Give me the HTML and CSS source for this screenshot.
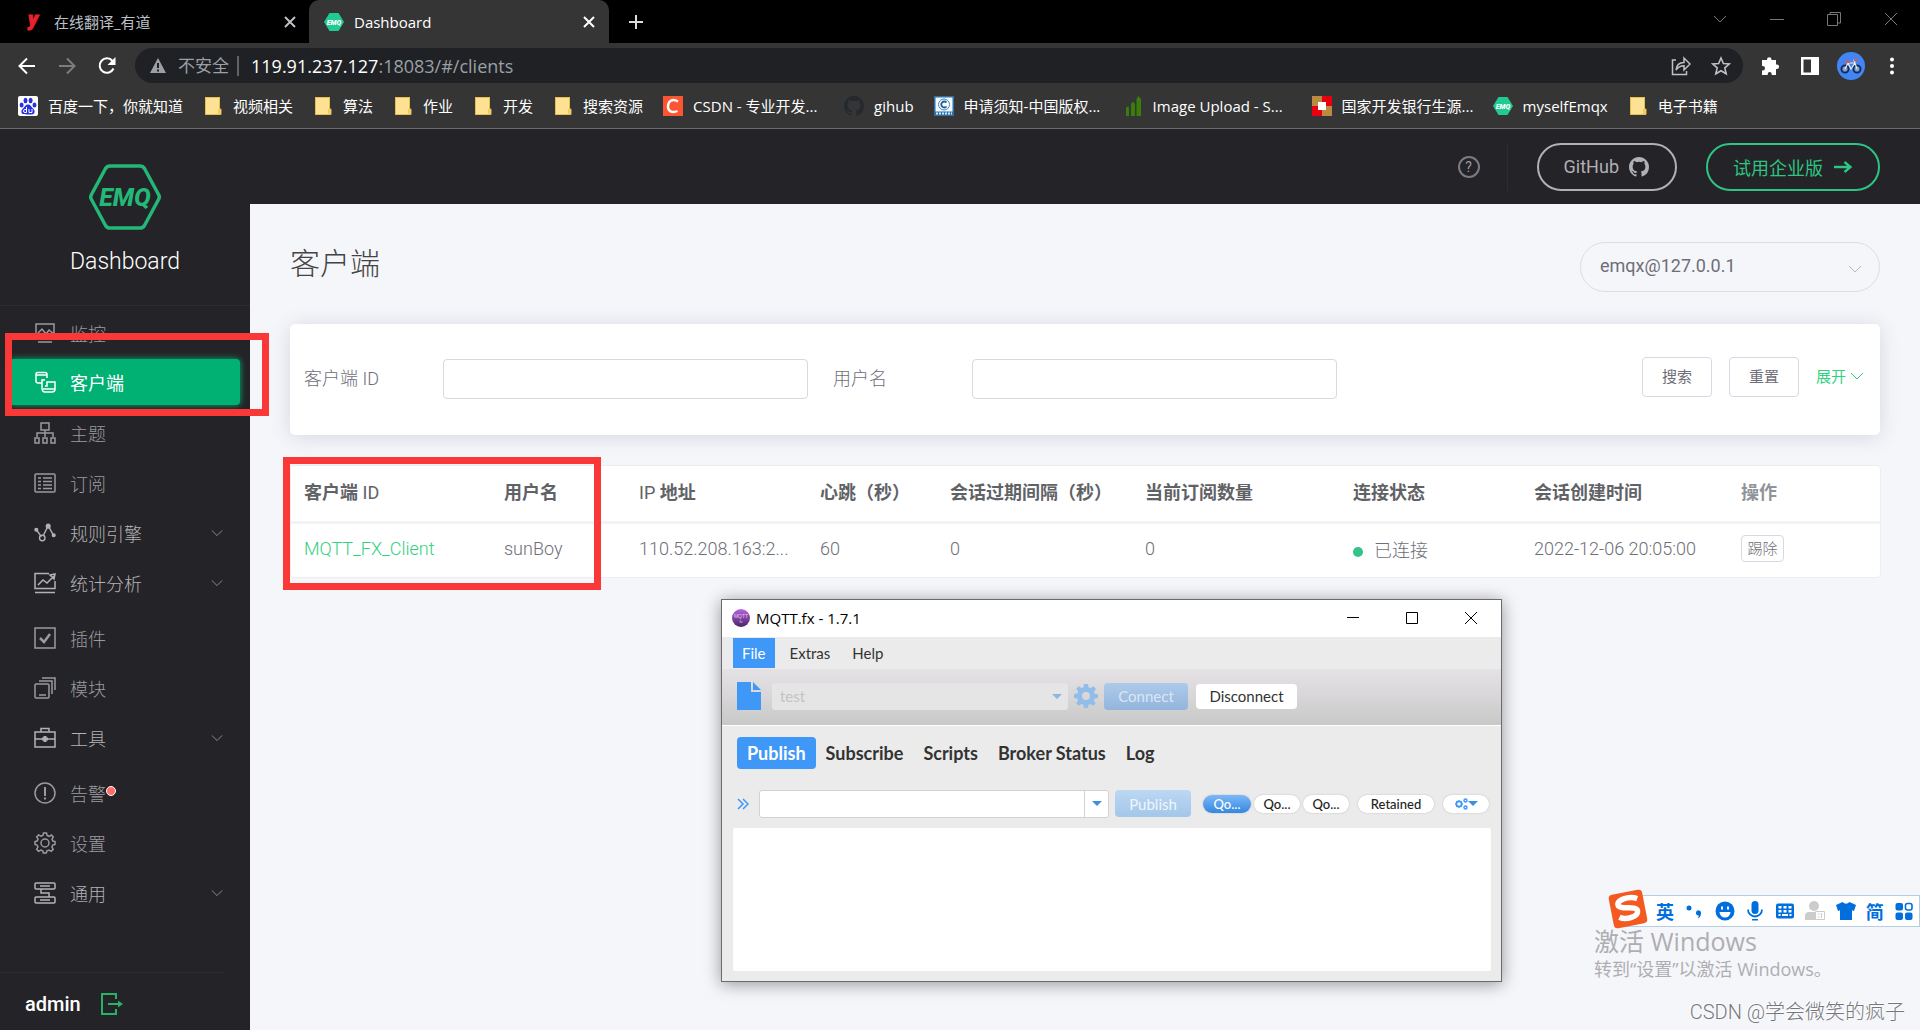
FILE: index.html
```html
<!DOCTYPE html>
<html lang="zh-CN">
<head>
<meta charset="utf-8">
<title>Dashboard</title>
<link rel="stylesheet" href="styles.css">
</head>
<body>
<svg class="sprite" aria-hidden="true">
  <symbol id="i-chevron" viewBox="0 0 14 14"><path d="M1 4l6 6 6-6" fill="none" stroke="currentColor"/></symbol>
  <symbol id="i-close" viewBox="0 0 14 14"><path d="M2 2l10 10M12 2L2 12" fill="none" stroke="currentColor" stroke-width="2"/></symbol>
  <symbol id="i-thin-close" viewBox="0 0 14 14"><path d="M1 1l12 12M13 1L1 13" fill="none" stroke="currentColor"/></symbol>
  <symbol id="i-folder" viewBox="0 0 20 20"><path d="M3 1h14v12.500h1v5H2V1z" fill="#fde293"/><path d="M2.500 1.500h14v11.500h1.500v5.500H2.500z" fill="none" stroke="#e6bf4f"/><path d="M15 13h2.500v5H15z" fill="#f3cc5e"/></symbol>
  <symbol id="i-emq" viewBox="0 0 20 20"><path d="M5.500 1h9L20 10l-5.500 9h-9L0 10z" fill="#1fcb91"/><text x="10" y="12.500" text-anchor="middle" font-family="Roboto, sans-serif" font-size="7" font-weight="900" font-style="italic" fill="#fff">EMQ</text></symbol>
  <symbol id="i-github" viewBox="0 0 16 16"><path fill="currentColor" d="M8 0C3.580 0 0 3.580 0 8c0 3.540 2.290 6.530 5.470 7.590.4.070.55-.17.55-.38 0-.19-.01-.82-.01-1.490-2.010.37-2.530-.49-2.690-.94-.09-.23-.48-.94-.82-1.130-.28-.15-.68-.52-.01-.53.63-.01 1.080.58 1.230.82.72 1.210 1.870.87 2.330.66.07-.52.28-.87.51-1.070-1.780-.2-3.640-.89-3.640-3.950 0-.87.31-1.590.82-2.150-.08-.2-.36-1.020.08-2.120 0 0 .67-.21 2.200.82a7.600 7.600 0 014 0c1.530-1.040 2.200-.82 2.200-.82.44 1.100.16 1.920.08 2.120.51.56.82 1.270.82 2.150 0 3.070-1.870 3.750-3.650 3.950.29.25.54.73.54 1.480 0 1.070-.01 1.930-.01 2.200 0 .21.15.46.55.38A8.010 8.010 0 0016 8c0-4.420-3.580-8-8-8z"/></symbol>
  <symbol id="i-gear" viewBox="0 0 24 24"><path fill="currentColor" fill-rule="evenodd" d="M10 0h4l.6 3.300 2 .9L19.400 2.300l2.500 2.700-1.900 2.700.8 2 3.200.5v3.800l-3.300.6-.8 2 1.900 2.700-2.600 2.500-2.700-1.900-2 .8L14 24h-4l-.6-3.300-2-.8-2.700 1.900-2.600-2.600L4 16.500l-.8-2L0 14v-4l3.300-.6.8-2L2.200 4.800l2.600-2.600 2.700 1.900 2-.8zM12 8a4 4 0 100 8 4 4 0 000-8z"/></symbol>
</svg>

<div class="browser">
  <div class="tabstrip">
    <div class="tab">
      <svg class="fav" viewBox="0 0 20 20"><text x="4" y="14" font-family="Roboto, sans-serif" font-size="20" font-weight="900" font-style="italic" fill="#e8222d" stroke="#e8222d">y</text></svg>
      <span class="tab-title">在线翻译_有道</span>
      <button class="tab-close" aria-label="关闭"><svg width="14" height="14"><use href="#i-close"/></svg></button>
    </div>
    <div class="tab tab-active">
      <svg class="fav"><use href="#i-emq"/></svg>
      <span class="tab-title">Dashboard</span>
      <button class="tab-close" aria-label="关闭"><svg width="14" height="14"><use href="#i-close"/></svg></button>
    </div>
    <button class="new-tab" aria-label="新标签页"><svg width="16" height="16" viewBox="0 0 16 16"><path d="M8 1v14M1 8h14" stroke="currentColor" stroke-width="2"/></svg></button>
    <div class="win-ctl">
      <button aria-label="搜索标签页"><svg width="14" height="14"><use href="#i-chevron"/></svg></button>
      <button aria-label="最小化"><svg width="14" height="14" viewBox="0 0 14 14"><path d="M0 7.500h14" stroke="currentColor"/></svg></button>
      <button aria-label="还原"><svg width="14" height="14" viewBox="0 0 14 14"><path d="M.5 2.500h10v11H.5zM3 2V.5h10.500V11H11" fill="none" stroke="currentColor"/></svg></button>
      <button aria-label="关闭窗口"><svg width="14" height="14"><use href="#i-thin-close"/></svg></button>
    </div>
  </div>

  <div class="toolbar">
    <button class="nav-btn" aria-label="后退"><svg width="20" height="20" viewBox="0 0 20 20"><path d="M18 10H3M10 2.500L2.500 10l7.500 7.500" fill="none" stroke="currentColor" stroke-width="2"/></svg></button>
    <button class="nav-btn nav-off" aria-label="前进"><svg width="20" height="20" viewBox="0 0 20 20"><path d="M2 10h15M10 2.500l7.500 7.500-7.500 7.500" fill="none" stroke="currentColor" stroke-width="2"/></svg></button>
    <button class="nav-btn" aria-label="刷新"><svg width="20" height="20" viewBox="0 0 20 20"><path d="M16.500 12.500A7.200 7.200 0 1115.500 5" fill="none" stroke="currentColor" stroke-width="2"/><path d="M18.500 1v8h-8z" fill="currentColor"/></svg></button>
    <div class="omnibox">
      <svg width="16" height="15" viewBox="0 0 16 15"><path d="M8 0l8 15H0z" fill="#9aa0a6"/><path d="M8 5v5M8 11.500v2" stroke="#202124" stroke-width="2"/></svg>
      <span class="insecure">不安全</span>
      <span class="url"><b>119.91.237.127</b>:18083/#/clients</span>
      <svg class="share" width="20" height="20" viewBox="0 0 20 20"><path d="M5 4H1.500v14.500h14V15M5 14c.5-5 3-7.500 8-7.500V2l6 6-6 6V9.800C9.500 9.800 7 11 5 14z" fill="none" stroke="currentColor" stroke-width="1.500"/></svg>
      <svg width="20" height="20" viewBox="0 0 20 20"><path d="M10 2l2.400 5.500 5.900.5-4.500 3.900 1.400 5.900L10 14.700l-5.200 3.100 1.400-5.900L1.700 8l5.900-.5z" fill="none" stroke="currentColor" stroke-width="1.600"/></svg>
    </div>
    <div class="tool-icons">
      <svg width="20" height="20" viewBox="0 0 20 20"><path d="M7 3.500a2.200 2.200 0 014.500 0V4H16v4.500h.8a2.300 2.300 0 010 4.600H16V19h-4.300v-1a2 2 0 00-4 0v1H2v-4.500h.8a2.200 2.200 0 000-4.400H2V4h5z" fill="#fff"/></svg>
      <svg width="20" height="20" viewBox="0 0 20 20"><path d="M1 1h18v18H1zM3.500 3.500v13H11v-13z" fill="#fff" fill-rule="evenodd"/></svg>
      <svg width="28" height="28" viewBox="0 0 28 28"><circle cx="14" cy="14" r="14" fill="#4285f4"/><g fill="none" stroke="#1b2a4a" stroke-width="1.800"><circle cx="8" cy="17" r="3.600"/><circle cx="20" cy="17" r="3.600"/></g><circle cx="8" cy="17" r="2.200" fill="#8aa4c8"/><circle cx="20" cy="17" r="2.200" fill="#8aa4c8"/><path d="M8 17l3-6h7l2 6M11 11l3 6 4-6-1-3h3" fill="none" stroke="#e8eaed" stroke-width="1.200"/><path d="M8 10h5M17 8h4" stroke="#e8543f" stroke-width="1.800"/></svg>
      <svg width="20" height="20" viewBox="0 0 20 20"><g fill="#fff"><circle cx="10" cy="3.500" r="2"/><circle cx="10" cy="10" r="2"/><circle cx="10" cy="16.500" r="2"/></g></svg>
    </div>
  </div>

  <nav class="bookmarks">
    <a href="#"><svg viewBox="0 0 20 20"><rect width="20" height="20" rx="2" fill="#fff"/><g fill="#2932e1"><ellipse cx="3.600" cy="9" rx="2" ry="2.600"/><ellipse cx="7.500" cy="4.500" rx="2" ry="2.700"/><ellipse cx="12.600" cy="4.500" rx="2" ry="2.700"/><ellipse cx="16.500" cy="9" rx="2" ry="2.600"/><path d="M10 8.500c2.500 0 3 2 4.500 3.500s2.500 2.500 2 4.500-2.500 2.300-6.500 2-6 .2-6.500-2 .5-3 2-4.500S7.500 8.500 10 8.500z"/></g><path d="M8.500 11v5.500h-1.500a1.500 1.500 0 010-3h1.500M11 13v3.500h3V13" fill="none" stroke="#fff"/></svg>百度一下，你就知道</a>
    <a href="#"><svg><use href="#i-folder"/></svg>视频相关</a>
    <a href="#"><svg><use href="#i-folder"/></svg>算法</a>
    <a href="#"><svg><use href="#i-folder"/></svg>作业</a>
    <a href="#"><svg><use href="#i-folder"/></svg>开发</a>
    <a href="#"><svg><use href="#i-folder"/></svg>搜索资源</a>
    <a href="#" class="bm-mid"><svg viewBox="0 0 20 20"><rect width="20" height="20" fill="#fc5531"/><path d="M15 5.500C9 2 5 5.500 5 10.500c0 5.500 5 6.500 9.500 4.500" fill="none" stroke="#fff" stroke-width="2.400"/></svg>CSDN - 专业开发...</a>
    <a href="#" class="bm-dark"><svg><use href="#i-github"/></svg><span>gihub</span></a>
    <a href="#" class="bm-long"><svg viewBox="0 0 20 20"><rect width="20" height="20" fill="#2f6fa8"/><rect x="1.500" y="1.500" width="17" height="14" fill="#f4f8fb"/><circle cx="10" cy="8.500" r="5.500" fill="none" stroke="#4b86b8"/><path d="M12.500 6.500a3 3 0 100 4" fill="none" stroke="#205e9b" stroke-width="1.800"/><path d="M2 17.500h16" stroke="#dce9f4" stroke-width="2" stroke-dasharray="2 1"/></svg>申请须知-中国版权...</a>
    <a href="#" class="bm-long"><svg viewBox="0 0 20 20"><g fill="#3a7d0b"><path d="M3 12l2-2 1 2v8H3zM8 8l2-2.500L12 8v12H8zM13.500 3l2-3L18 3v17h-4.500z"/></g></svg>Image Upload - S...</a>
    <a href="#" class="bm-mid"><svg viewBox="0 0 20 20"><path d="M0 0h10v10H0zM10 10h10v10H10z" fill="#bd8a42"/><path d="M10 0h10v10H10zM0 10h10v10H0z" fill="#e60012"/><rect x="6" y="6" width="8" height="8" fill="#fff"/></svg>国家开发银行生源...</a>
    <a href="#"><svg><use href="#i-emq"/></svg>myselfEmqx</a>
    <a href="#"><svg><use href="#i-folder"/></svg>电子书籍</a>
  </nav>
</div>

<div class="app">
  <aside class="sidebar">
    <div class="brand">
      <svg width="72" height="66" viewBox="0 0 72 66"><path d="M21 2h30q3 0 4.500 2.500l14 26q1.500 2.500 0 5l-14 26Q54 64 51 64H21q-3 0-4.500-2.500l-14-26q-1.500-2.500 0-5l14-26Q18 2 21 2z" fill="none" stroke="#23b877" stroke-width="3.500"/><text x="36" y="42" text-anchor="middle" font-family="Roboto, sans-serif" font-size="25" font-weight="800" font-style="italic" fill="#23b877">EMQ</text></svg>
      <span>Dashboard</span>
    </div>
    <nav class="menu">
      <div class="menu-group">
        <a href="#"><svg viewBox="0 0 22 22"><path d="M2 2h18v14H2zM4 20h14M4 11l4-4 4 5 3-4 5 4"/></svg>监控</a>
        <a href="#" class="active"><svg viewBox="0 0 22 22"><path d="M8 12H4q-2 0-2-2V3q0-1.500 1.500-1.500H11q2 0 2 2V7M2 4h11M11 9h-3v8q0 4 3 4h7q3 0 3-3v-7h-8v4h-2M9 18h12"/></svg>客户端</a>
        <a href="#"><svg viewBox="0 0 22 22"><path d="M7 1h8v7H7zM11 8v7M3 15v-4h16v4M1 16h4v5H1zM9 16h4v5H9zM17 16h4v5h-4z"/></svg>主题</a>
        <a href="#"><svg viewBox="0 0 22 22"><rect x="1" y="2" width="20" height="18" rx="1"/><path d="M4 6h3M9 6h9M4 9.500h3M9 9.500h9M4 13h3M9 13h9M4 16.500h3M9 16.500h9"/></svg>订阅</a>
        <a href="#" class="sub"><svg viewBox="0 0 24 22"><path d="M3 8l5 7M10 14l5-10M16 4l5 9"/><circle cx="2.500" cy="7.500" r="1.500" fill="currentColor"/><circle cx="9" cy="16.500" r="3"/><circle cx="15.500" cy="3.500" r="2" fill="currentColor"/><circle cx="21.500" cy="13.500" r="1.500" fill="currentColor"/></svg>规则引擎<svg class="caret"><use href="#i-chevron"/></svg></a>
        <a href="#" class="sub"><svg viewBox="0 0 22 22"><path d="M15 1.500H1v15h20V9M1 20.500h20M4 13l5-5 4 3 7-7M16 3l5-1-1 5z"/></svg>统计分析<svg class="caret"><use href="#i-chevron"/></svg></a>
      </div>
      <div class="menu-group">
        <a href="#"><svg viewBox="0 0 22 22"><path d="M1 1h20v20H1z"/><path d="M6 11l4 4 6-8" stroke-width="2.500"/></svg>插件</a>
        <a href="#"><svg viewBox="0 0 22 22"><rect x="1" y="7" width="14" height="14" rx="1"/><path d="M5 4h13v13M8 1h13v12M5 18h7"/></svg>模块</a>
        <a href="#" class="sub"><svg viewBox="0 0 22 22"><path d="M1 5h20v15H1zM7 5V1.500h8V5M1 12h7M14 12h7"/><path d="M8 12h6M11 9v6" stroke-width="3"/></svg>工具<svg class="caret"><use href="#i-chevron"/></svg></a>
      </div>
      <div class="menu-group">
        <a href="#"><svg viewBox="0 0 22 22"><circle cx="11" cy="11" r="10"/><path d="M11 5v9M11 15.500v2" stroke-width="2"/></svg>告警<i class="dot"></i></a>
        <a href="#"><svg viewBox="0 0 22 22"><circle cx="11" cy="11" r="4"/><path d="M9.500 1h3l.6 2.500 2 .8L17.500 3l1.800 2-1.300 2.200.8 1.800 2.200.6v2.800l-2.300.7-.8 2 1.300 2.200-2 2-2.200-1.300-2 .8-.7 2.200h-3L8.800 18.800l-2-.8-2.200 1.300-2-2L3.900 15l-.8-2L1 12.400V9.600L3.200 9 4 7 2.700 4.900l2-2L6.900 4.200l2-.8z"/></svg>设置</a>
        <a href="#" class="sub"><svg viewBox="0 0 22 22"><rect x="1" y="1" width="20" height="6" rx="1"/><rect x="1" y="15" width="20" height="6" rx="1"/><path d="M6 4h10M6 18h10M7 7v4h8v4"/></svg>通用<svg class="caret"><use href="#i-chevron"/></svg></a>
      </div>
    </nav>
    <div class="user">
      <span>admin</span>
      <a href="#" aria-label="退出"><svg width="22" height="22" viewBox="0 0 22 22"><path d="M15 6V1H1v20h14v-5M7 11h12" fill="none" stroke="currentColor" stroke-width="2"/><path d="M17 7.500l5 3.500-5 3.500z" fill="currentColor"/></svg></a>
    </div>
  </aside>

  <div class="main">
    <header class="topbar">
      <a href="#" class="help" aria-label="帮助">?</a>
      <div class="top-links">
        <a href="#" class="pill">GitHub<svg width="20" height="20"><use href="#i-github"/></svg></a>
        <a href="#" class="pill pill-green">试用企业版<svg width="18" height="14" viewBox="0 0 18 14"><path d="M0 7h15M10.500 2l6 5-6 5" fill="none" stroke="currentColor" stroke-width="2.400"/></svg></a>
      </div>
    </header>
    <main class="content">
      <div class="page-head">
        <h1>客户端</h1>
        <div class="node">
          <select aria-label="节点"><option>emqx@127.0.0.1</option></select>
          <svg width="14" height="14"><use href="#i-chevron"/></svg>
        </div>
      </div>

      <form class="card">
        <div class="field"><label for="cid">客户端 ID</label><input id="cid" type="text"></div>
        <div class="field"><label for="uname">用户名</label><input id="uname" type="text"></div>
        <div class="actions">
          <button type="button" class="btn">搜索</button>
          <button type="button" class="btn">重置</button>
          <a href="#">展开<svg width="14" height="14"><use href="#i-chevron"/></svg></a>
        </div>
      </form>

      <table class="clients">
        <colgroup><col class="w-id"><col class="w-name"><col class="w-ip"><col class="w-beat"><col class="w-expire"><col class="w-subs"><col class="w-state"><col class="w-time"><col class="w-op"></colgroup>
        <thead>
          <tr><th>客户端 <span>ID</span></th><th>用户名</th><th><span>IP</span> 地址</th><th>心跳（秒）</th><th>会话过期间隔（秒）</th><th>当前订阅数量</th><th>连接状态</th><th>会话创建时间</th><th class="muted">操作</th></tr>
        </thead>
        <tbody>
          <tr><td><a href="#">MQTT_FX_Client</a></td><td>sunBoy</td><td>110.52.208.163:2...</td><td>60</td><td>0</td><td>0</td><td><i class="online"></i>已连接</td><td>2022-12-06 20:05:00</td><td><button class="kick">踢除</button></td></tr>
        </tbody>
      </table>
    </main>
  </div>
</div>

<div class="mark mark-menu"></div>
<div class="mark mark-table"></div>

<section class="fx">
  <div class="fx-title">
    <svg width="18" height="18" viewBox="0 0 18 18"><defs><linearGradient id="orb" x2="0" y2="1"><stop offset="0" stop-color="#b964e0"/><stop offset="1" stop-color="#4b2366"/></linearGradient></defs><circle cx="9" cy="9" r="9" fill="url(#orb)"/><text x="9" y="9" text-anchor="middle" font-family="Liberation Sans, sans-serif" font-size="5" fill="#e5c8f2">MQTT</text><text x="9" y="14" text-anchor="middle" font-family="Liberation Sans, sans-serif" font-size="4" fill="#e5c8f2">fx</text></svg>
    <span>MQTT.fx - 1.7.1</span>
    <div class="fx-ctl">
      <button aria-label="Minimize"><svg width="12" height="12" viewBox="0 0 12 12"><path d="M0 5.500h12" stroke="#000"/></svg></button>
      <button aria-label="Maximize"><svg width="12" height="12" viewBox="0 0 12 12"><path d="M.5.5h11v11H.5z" fill="none" stroke="#000"/></svg></button>
      <button aria-label="Close"><svg width="12" height="12" viewBox="0 0 12 12"><path d="M0 0l12 12M12 0L0 12" stroke="#000"/></svg></button>
    </div>
  </div>
  <div class="fx-menu"><button class="on">File</button><button>Extras</button><button>Help</button></div>
  <div class="fx-bar">
    <svg width="24" height="28" viewBox="0 0 24 28"><path d="M0 0h14v10h10v18H0zM16 0l8 8h-8z" fill="#3f98f7"/></svg>
    <div class="fx-combo"><select aria-label="Profile" disabled><option>test</option></select><i class="tri"></i></div>
    <svg class="fx-gear" width="24" height="24"><use href="#i-gear"/></svg>
    <button class="fx-btn fx-blue" disabled>Connect</button>
    <button class="fx-btn">Disconnect</button>
  </div>
  <div class="fx-tabs"><button class="on">Publish</button><button>Subscribe</button><button>Scripts</button><button>Broker Status</button><button>Log</button></div>
  <div class="fx-pub">
    <svg width="12" height="12" viewBox="0 0 12 12"><path d="M1 1l5 5-5 5M6 1l5 5-5 5" fill="none" stroke="#3f98f7" stroke-width="1.500"/></svg>
    <div class="fx-topic"><input type="text" aria-label="Topic"><button aria-label="History"><i class="tri"></i></button></div>
    <button class="fx-btn fx-pale" disabled>Publish</button>
    <div class="fx-qos"><button class="on">Qo...</button><button>Qo...</button><button>Qo...</button></div>
    <button class="fx-pill fx-wide">Retained</button>
    <button class="fx-pill" aria-label="Options"><svg width="13" height="12" viewBox="0 0 26 24"><g fill="none" stroke="#3f98f7" stroke-width="4"><circle cx="8" cy="12" r="5"/></g><path d="M8 4v16M0 12h16M2.500 6.500l11 11M13.500 6.500l-11 11" stroke="#3f98f7" stroke-width="2.500"/><circle cx="8" cy="12" r="3.500" fill="#fff"/><g fill="none" stroke="#3f98f7" stroke-width="3"><circle cx="21" cy="5" r="3"/><circle cx="21" cy="19" r="3"/></g></svg><i class="tri"></i></button>
  </div>
  <textarea aria-label="Payload"></textarea>
</section>

<div class="activate"><p>激活 Windows</p><p class="small">转到“设置”以激活 Windows。</p></div>
<div class="credit">CSDN @学会微笑的疯子</div>

<div class="ime">
  <svg class="ime-logo" width="40" height="40" viewBox="0 0 40 40"><g transform="rotate(-11 20 20)"><rect x="3" y="3" width="34" height="34" rx="4" fill="#f4591f"/><path d="M31 11.500C23 7 10 9 11 14.500s18 3 18 9-13 7.500-19 3" fill="none" stroke="#fff" stroke-width="5.500"/></g></svg>
  <b>英</b>
  <svg viewBox="0 0 20 20"><circle cx="5" cy="7" r="2.500"/><path d="M12 11.500a2.500 2.500 0 115 .8c0 2.700-1.500 4.700-3.500 5.500 1-1.300 1.300-2.300 1.200-3.300a2.500 2.500 0 01-2.700-3z"/></svg>
  <svg viewBox="0 0 20 20"><circle cx="10" cy="10" r="9.500"/><path d="M4.500 11h11a5.500 5.500 0 01-11 0zM6 5.500h2v3H6zM12 5.500h2v3h-2z" fill="#fff"/></svg>
  <svg viewBox="0 0 20 20"><rect x="6.500" y="0" width="7" height="13" rx="3.500"/><path d="M3 8.500a7 7 0 0014 0" fill="none" stroke="#006edc" stroke-width="1.800"/><path d="M7 18h6v1.500H7z"/></svg>
  <svg viewBox="0 0 20 20"><rect x="1" y="2.500" width="18" height="15" rx="2"/><path d="M3.500 5h3v2.500h-3zM8.500 5h3v2.500h-3zM13.500 5h3v2.500h-3zM3.500 9h3v2.500h-3zM8.500 9h3v2.500h-3zM13.500 9h3v2.500h-3zM3.500 13h2v2h-2zM7 13h6v2H7zM14.500 13h2v2h-2z" fill="#fff"/></svg>
  <svg viewBox="0 0 20 20" class="off"><circle cx="9" cy="5" r="5"/><path d="M0 19v-4q0-4 4-4h8v8z"/><path d="M10.500 10.500h9v8h-9z" fill="#fff" stroke="#ccc"/><path d="M12.500 13h2M12.500 16h2M16.500 12v5" stroke="#ccc"/></svg>
  <svg viewBox="0 0 20 20"><path d="M6.500 1Q10 4.500 13.500 1L20 4l-2 6-2-.7V19H4V9.300L2 10 0 4z"/></svg>
  <b>简</b>
  <svg viewBox="0 0 20 20"><rect x="1.500" y="2" width="7.500" height="7.500" rx="2"/><rect x="11.500" y="2.500" width="6.500" height="6.500" rx="2" fill="none" stroke="#006edc" stroke-width="1.600"/><rect x="1.500" y="11.500" width="7.500" height="7.500" rx="2"/><rect x="11" y="11.500" width="7.500" height="7.500" rx="2"/></svg>
</div>
</body>
</html>
```
FILE: styles.css
```css
* { box-sizing: border-box; }

body {
  margin: 0;
  position: relative;
  min-height: 100vh;
  display: flex;
  flex-direction: column;
  overflow: hidden;
  background: #f5f6fa;
  font-family: Roboto, "Noto Sans CJK SC", sans-serif;
  color: #6e6e78;
}

button, input, select, textarea { font: inherit; color: inherit; margin: 0; }
button { border: 0; padding: 0; background: none; display: flex; align-items: center; justify-content: center; white-space: nowrap; }
a { color: inherit; text-decoration: none; }
svg { flex: none; display: block; }
.sprite { display: none; }

/* browser frame */
.browser { background: #353535; color: #fff; font-family: "Open Sans", "Noto Sans CJK SC", sans-serif; border-bottom: 1px solid #6b6b6b; }
.tabstrip { display: flex; height: 43px; background: #000; }
.tab { display: flex; align-items: center; width: 309px; padding: 0 10px 0 24px; font-size: 15px; color: #bdc1c6; }
.tab-active { width: 300px; padding: 0 11px 0 15px; background: #353535; border-radius: 10px 10px 0 0; color: #fff; }
.fav { width: 20px; height: 20px; margin-right: 10px; overflow: visible; }
.tab-close { margin-left: auto; width: 18px; height: 18px; }
.new-tab { width: 54px; color: #ddd; }
.win-ctl { display: flex; margin-left: auto; color: #777; padding: 0 1px 6px 0; }
.win-ctl button { width: 57px; }

.toolbar { display: flex; align-items: center; height: 45px; padding-left: 7px; }
.nav-btn { width: 40px; height: 40px; }
.nav-off { color: #7d7d7d; }
.omnibox { flex: 1; display: flex; align-items: center; height: 35px; margin-left: 8px; padding: 0 12px 0 15px; border-radius: 18px; background: #202124; color: #bdc1c6; }
.insecure { margin-left: 12px; padding-right: 8px; border-right: 2px solid #5f6368; font-size: 17px; line-height: 20px; color: #9aa0a6; }
.url { margin-left: 12px; font-size: 18px; line-height: 24px; color: #9aa0a6; }
.url b { font-weight: 400; color: #fff; }
.share { margin-left: auto; margin-right: 20px; }
.tool-icons { display: flex; align-items: center; gap: 17px; padding: 0 18px 0 17px; }
.tool-icons svg:nth-child(2) { margin-left: 3px; }

.bookmarks { display: flex; align-items: center; gap: 20px; height: 40px; padding: 0 18px 4px; overflow: hidden; font-size: 15px; line-height: 20px; white-space: nowrap; }
.bookmarks a { display: flex; align-items: center; gap: 10px; }
.bookmarks svg { width: 20px; height: 20px; }
.bookmarks .bm-mid { width: 161px; }
.bookmarks .bm-long { width: 169px; }
.bm-dark svg { color: #24292e; }

/* dashboard shell */
.app { flex: 1; display: flex; background: #f5f6fa; }
.sidebar { width: 250px; flex: none; display: flex; flex-direction: column; background: #242327; color: #9a9a9f; }
.brand { display: flex; flex-direction: column; align-items: center; gap: 18px; height: 177px; padding-top: 35px; border-bottom: 1px solid #2d2c31; color: #fff; font-size: 23px; font-weight: 300; }
.menu { flex: 1; display: flex; flex-direction: column; gap: 5px; padding-top: 2px; }
.menu a { display: flex; align-items: center; height: 50px; padding-left: 34px; font-size: 18px; font-weight: 300; }
.menu svg { width: 22px; height: 22px; margin-right: 14px; fill: none; stroke: currentColor; stroke-width: 1.5; }
.menu .active { height: 46px; margin: 1px 10px 3px; padding-left: 24px; border-radius: 4px; background: #00b173; box-shadow: 0 0 6px #00b173; color: #fff; font-weight: 400; }
.menu .sub { color: #b2b2b6; }
.menu .caret { width: 12px; height: 12px; margin: 0 27px 0 auto; color: #9a9a9f; stroke-width: 1; }
.dot { width: 10px; height: 10px; margin-top: -4px; border: 1px solid #fff; border-radius: 50%; background: #ff6d6d; }
.user { display: flex; align-items: center; gap: 20px; height: 58px; width: 225px; padding: 4px 0 0 25px; border-top: 1px solid #2d2c31; font-size: 20px; font-weight: 500; color: #fff; }
.user a { color: #28b268; }

.main { flex: 1; min-width: 0; }
.topbar { display: flex; align-items: center; justify-content: flex-end; height: 75px; padding-right: 40px; background: #242327; color: #9c9ca3; }
.help { width: 22px; height: 22px; margin-right: 27px; border: 2px solid #7b7b83; border-radius: 50%; font-size: 14px; line-height: 18px; text-align: center; }
.top-links { display: flex; gap: 29px; padding-left: 29px; border-left: 1px solid #2d2c31; }
.pill { display: flex; align-items: center; gap: 10px; height: 48px; padding: 0 26px 0 25px; border: 2px solid #b0b0b5; border-radius: 24px; font-size: 18px; color: #b0b0b5; }
.pill-green { gap: 11px; border-color: #2ec483; color: #2ec483; }
.content { padding: 38px 40px; }

.page-head { display: flex; justify-content: space-between; height: 82px; }
h1 { margin: 0; font-size: 30px; line-height: 44px; font-weight: 300; color: #444; }
.node { position: relative; width: 300px; height: 50px; }
.node select { width: 100%; height: 100%; padding: 0 19px 3px; border: 1px solid #dcdde3; border-radius: 25px; background: transparent; appearance: none; font-size: 18px; color: #6e6e78; }
.node svg { position: absolute; right: 18px; top: 20px; color: #b4b6c0; pointer-events: none; }

.card { display: grid; grid-template-columns: 1fr 1fr 1fr; gap: 25px; align-items: start; height: 111px; padding: 35px 14px 0; border-radius: 5px; background: #fff; box-shadow: 0 2px 20px rgba(60, 60, 80, .16); }
.field { display: flex; align-items: center; font-size: 18px; font-weight: 300; }
.field label { width: 139px; flex: none; padding-bottom: 4px; }
.field input { flex: 1; min-width: 0; height: 40px; border: 1px solid #d8d8e0; border-radius: 4px; background: #fff; }
.actions { display: flex; align-items: center; justify-content: flex-end; font-size: 15px; margin: -2px 2px 0 0; }
.btn { width: 70px; height: 40px; margin-right: 17px; padding-bottom: 3px; border: 1px solid #d8d8e4; border-radius: 4px; background: #fff; }
.actions a { display: flex; align-items: center; gap: 4px; padding-bottom: 3px; color: #34d07f; }

.clients { width: 100%; margin-top: 30px; table-layout: fixed; border-collapse: separate; border-spacing: 0; background: #fff; border: 1px solid #eeeef2; border-radius: 4px; font-size: 18px; font-weight: 300; text-align: left; }
.clients th { height: 58px; padding: 0 0 5px 13px; border-bottom: 3px solid #f3f3f5; color: #606266; font-weight: 700; white-space: nowrap; }
.clients th span { font-weight: 400; }
.clients th.muted { color: #909399; }
.clients td { height: 53px; padding: 0 0 4px 13px; white-space: nowrap; }
.clients td a { color: #34d07f; }
.w-id { width: 200px; } .w-name { width: 135px; } .w-ip { width: 181px; } .w-beat { width: 130px; } .w-expire { width: 195px; }
.w-subs { width: 208px; } .w-state { width: 181px; } .w-time { width: 207px; } .w-op { width: 152px; }
.online { display: inline-block; width: 10px; height: 10px; margin-right: 11px; border-radius: 50%; background: #34c388; }
.kick { width: 43px; height: 27px; padding-bottom: 2px; border: 1px solid #d8d8e4; border-radius: 4px; font-size: 15px; }

/* highlight frames */
.mark { position: absolute; border: 7px solid #fb3838; }
.mark-menu { left: 5px; top: 333px; width: 264px; height: 83px; }
.mark-table { left: 283px; top: 457px; width: 318px; height: 133px; }

/* MQTT.fx window */
.fx { position: absolute; left: 721px; top: 599px; width: 781px; height: 383px; display: flex; flex-direction: column; border: 1px solid #6b6a6e; background: #ebebeb; box-shadow: 0 2px 16px rgba(0, 0, 0, .4); font-family: Lato, sans-serif; font-size: 16px; color: #333; }
.fx-title { display: flex; align-items: center; gap: 6px; height: 37px; padding: 0 1px 1px 10px; background: #fff; font-family: "Open Sans", sans-serif; font-size: 15px; color: #000; }
.fx-ctl { display: flex; margin-left: auto; }
.fx-ctl button { width: 59px; height: 36px; }
.fx-menu { display: flex; height: 32px; padding: 1px 11px; gap: 8px; font-size: 15px; }
.fx-menu button { padding: 0 7px; }
.fx-menu .on, .fx-tabs .on { background: #3f98f7; color: #fff; }
.fx-menu .on { padding: 0 9px; }
.fx-bar { display: flex; align-items: center; height: 57px; padding: 0 0 2px 15px; border-bottom: 1px solid #fff; background: linear-gradient(#e4e2e4, #d8d6d8 50%, #c8c8c8); }
.fx-combo { position: relative; width: 296px; height: 27px; margin: 0 6px 0 11px; }
.fx-combo select { width: 100%; height: 100%; padding: 0 8px; border: 0; border-radius: 3px; background: #e6e5e6; appearance: none; opacity: 1; font-size: 15px; color: #c3c2c4; }
.tri { display: block; border: 5px solid transparent; border-top-color: #3f8fe0; border-bottom: 0; }
.fx-combo .tri { position: absolute; right: 6px; top: 11px; opacity: .55; }
.fx-gear { color: #93bde9; }
.fx-btn { height: 25px; width: 101px; border-radius: 4px; background: #fff; font-size: 15px; }
.fx-btn.fx-blue { width: 84px; height: 27px; margin: 0 8px 0 6px; background: linear-gradient(#adcaea, #93b5dc); color: #dce6f2; }
.fx-btn.fx-pale { width: 76px; height: 27px; margin: 0 12px 0 6px; background: linear-gradient(#bcd7f2, #a3c7ea); color: #f0f5fa; }
.fx-tabs { display: flex; padding: 11px 15px 10px; height: 53px; font-size: 18px; font-weight: 700; }
.fx-tabs button { padding: 0 10px; border-radius: 4px; }
.fx-pub { display: flex; align-items: center; height: 49px; padding-left: 15px; }
.fx-topic { display: flex; width: 350px; height: 28px; margin-left: 10px; border: 1px solid #d2d2d2; border-radius: 3px; background: #fff; }
.fx-topic input { flex: 1; min-width: 0; border: 0; background: none; }
.fx-topic button { width: 24px; border-left: 1px solid #d2d2d2; }
.fx-qos { display: flex; gap: 3px; margin-right: 9px; }
.fx-qos button, .fx-pill { width: 46px; height: 18px; border-radius: 9px; background: #fff; box-shadow: 0 0 2px #bbb; font-size: 13px; font-weight: 500; color: #222; }
.fx-qos .on { width: 48px; background: linear-gradient(#7db8f7, #3487e0); color: #fff; }
.fx-pill.fx-wide { width: 76px; margin-right: 9px; }
.fx textarea { flex: 1; margin: 0 10px 10px 11px; border: 0; border-radius: 2px; background: #fff; resize: none; }

/* desktop overlays */
.activate { position: absolute; left: 1594px; top: 923px; font-family: "Open Sans", "Noto Sans CJK SC", sans-serif; font-weight: 300; color: #aeaeb2; white-space: nowrap; }
.activate p { margin: 0; font-size: 25px; line-height: 36px; font-weight: 400; }
.activate .small { font-size: 18px; line-height: 20px; }
.credit { position: absolute; right: 15px; top: 997px; font-size: 20px; line-height: 30px; font-weight: 300; color: #77777a; text-shadow: -1px -1px 0 #fff; white-space: nowrap; }
.ime { position: absolute; right: 0; top: 895px; width: 300px; height: 32px; display: flex; align-items: center; justify-content: space-between; padding: 0 5px 0 35px; border: 1px solid #b9cde2; background: #fff; font-size: 18px; color: #006edc; fill: #006edc; }
.ime svg { width: 20px; height: 20px; }
.ime .off { fill: #ccc; }
.ime .ime-logo { position: absolute; left: -13px; top: -7px; width: 40px; height: 40px; }
```
